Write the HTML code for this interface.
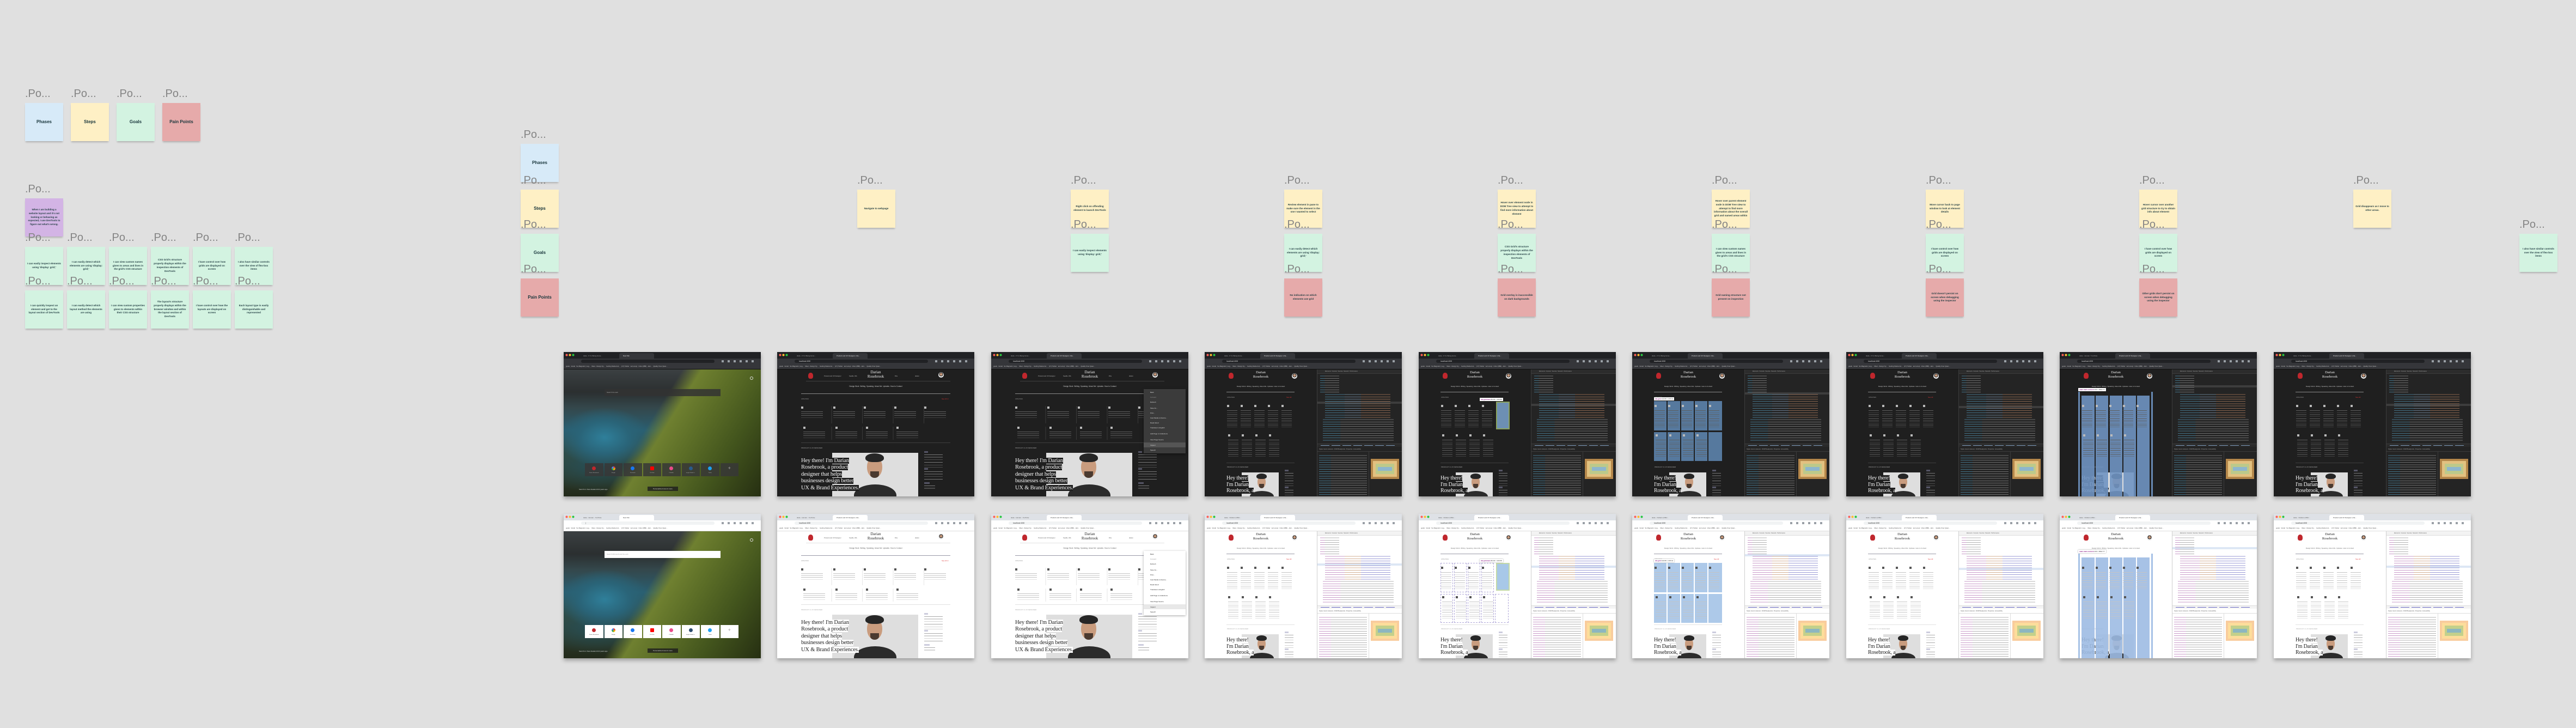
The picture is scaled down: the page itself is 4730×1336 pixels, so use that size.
<!DOCTYPE html>
<html><head><meta charset="utf-8">
<style>
*{margin:0;padding:0;box-sizing:border-box}
html,body{width:4730px;height:1336px;overflow:hidden;background:#e0e0e0;position:relative;font-family:"Liberation Sans",sans-serif}
.lb{position:absolute;font:20px/20px "Liberation Sans",sans-serif;color:#848484;white-space:nowrap}
.s{position:absolute;width:70px;height:70px;display:flex;align-items:center;justify-content:center;text-align:center;font:700 4.5px/1.55 "Liberation Sans",sans-serif;color:#1f3b40;padding:0 4px;box-shadow:0 3px 3px -1px rgba(0,0,0,.22)}
.s.h{font-size:8px;font-weight:700;color:#17343a}
.bl{background:#d7eaf8}.ye{background:#fef0c5}.gr{background:#d3f3e1}.rd{background:#e6aaaa}.pu{background:#d3b4e5}
.ss{position:absolute;width:362px;height:265px;overflow:hidden;box-shadow:0 4px 7px rgba(0,0,0,.3);font-family:"Liberation Sans",sans-serif}
.ss *{position:absolute}
.ss br{position:static}
.hero span{position:static}
.d{background:#1f1f1f;color:#ddd}.l{background:#fff;color:#333}
.tb{left:0;top:0;width:100%;height:12px;background:#202124}
.l .tb{background:#dee1e6}
.dots{left:3px;top:3px;width:18px;height:5px;background:radial-gradient(circle at 2.5px 2.5px,#ff5f57 1.9px,transparent 2.2px),radial-gradient(circle at 8.5px 2.5px,#febc2e 1.9px,transparent 2.2px),radial-gradient(circle at 14.5px 2.5px,#28c840 1.9px,transparent 2.2px)}
.t1{left:30px;top:2px;width:70px;height:10px;font-size:3px;line-height:10px;color:#aaa;white-space:nowrap;overflow:hidden;padding-left:6px}
.t2{left:102px;top:2px;width:64px;height:10px;font-size:3px;line-height:10px;color:#eee;background:#35363a;border-radius:3px 3px 0 0;white-space:nowrap;overflow:hidden;padding-left:7px}
.l .t2{background:#fff;color:#333}.l .t1{color:#555}
.ab{left:0;top:12px;width:100%;height:10px;background:#35363a}
.l .ab{background:#fff}
.url{left:32px;top:2px;width:245px;height:6px;border-radius:3px;background:#202124;font-size:3.3px;line-height:6px;padding-left:8px;color:#ddd}
.l .url{background:#f1f3f4;color:#333}
.abi{left:290px;top:3px;width:66px;height:4px;background:repeating-linear-gradient(to right,#9aa0a6 0 4px,transparent 4px 11px)}
.bmk{left:0;top:22px;width:100%;height:10px;background:#35363a;border-bottom:1px solid #111;font-size:2.9px;line-height:9px;padding-left:4px;white-space:nowrap;overflow:hidden;color:#ccc}
.l .bmk{background:#fff;border-bottom-color:#ddd;color:#444}
.logo{width:9px;height:11px;background:#c0272d;border-radius:45% 45% 35% 35%}
.nm{text-align:center;font:7px/8px "Liberation Serif",serif;color:#eee;white-space:nowrap}
.l .nm{color:#222}
.hdt{font-size:2.8px;color:#bbb;white-space:nowrap}.l .hdt{color:#555}
.av{width:10px;height:10px;border-radius:50%;background:radial-gradient(circle at 50% 40%,#c89a7c 30%,#2a2a2a 32%,#2a2a2a 45%,#eee 47%)}
.hr1{height:1px;background:#3f3f3f}.l .hr1{background:#e2e2e2}
.hr2{height:1.3px;background:#8a8a8a}.l .hr2{background:#9a9aa8}
.nav{font-size:3.2px;white-space:nowrap;color:#ccc;text-align:center}.l .nav{color:#666}
.up{font-size:3px;color:#999}.sa{font-size:3px;color:#d33}
.it{width:40px;height:26px;background:linear-gradient(#bbb,#bbb) 0 0/4px 4px no-repeat,repeating-linear-gradient(#5e5e5e 0 .8px,transparent .8px 3.6px) 0 9px/100% 13px no-repeat}
.l .it{background:linear-gradient(#555,#555) 0 0/4px 4px no-repeat,repeating-linear-gradient(#c4c4c4 0 .8px,transparent .8px 3.6px) 0 9px/100% 13px no-repeat}
.N .it{width:19px;height:44px;background:linear-gradient(#bbb,#bbb) 0 0/4px 4px no-repeat,repeating-linear-gradient(#5e5e5e 0 .8px,transparent .8px 3.8px) 0 10px/100% 34px no-repeat}
.l.N .it{background:linear-gradient(#555,#555) 0 0/4px 4px no-repeat,repeating-linear-gradient(#c4c4c4 0 .8px,transparent .8px 3.8px) 0 10px/100% 34px no-repeat}
.sep{background:repeating-linear-gradient(to right,transparent 0 55.5px,#3a3a3a 55.5px 56.5px)}
.l .sep{background:repeating-linear-gradient(to right,transparent 0 55.5px,#e6e6e6 55.5px 56.5px)}
.pux{font-size:3px;color:#aaa;white-space:nowrap}
.ph{background:#dedede;overflow:hidden}
.hair{background:#262626;border-radius:50% 50% 40% 40%}
.face{background:#c99c7e;border-radius:45% 45% 50% 50%}
.beard{background:#4a3a30;border-radius:0 0 50% 50%}
.shirt{background:#2b2b2b;border-radius:50% 50% 0 0}
.hero{font:10.5px/12.4px "Liberation Serif",serif;white-space:nowrap;letter-spacing:-.2px}
.hero span{background:#1f1f1f;color:#f2f2f2}
.l .hero span{background:#fff;color:#222}
.N .hero{font-size:10px;line-height:11.5px}
.sk{background:linear-gradient(#556,#556) 0 7px/7px 3px no-repeat,linear-gradient(#556,#556) 0 38px/7px 3px no-repeat,linear-gradient(#556,#556) 0 64px/10px 3px no-repeat,repeating-linear-gradient(#777 0 .8px,transparent .8px 4.7px) 0 13px/100% 24px no-repeat,repeating-linear-gradient(#777 0 .8px,transparent .8px 4.7px) 0 44px/100% 19px no-repeat,repeating-linear-gradient(#777 0 .8px,transparent .8px 4.7px) 0 70px/60% 8px no-repeat}
.l .sk{background:linear-gradient(#ccd,#ccd) 0 7px/7px 3px no-repeat,linear-gradient(#ccd,#ccd) 0 38px/7px 3px no-repeat,linear-gradient(#ccd,#ccd) 0 64px/10px 3px no-repeat,repeating-linear-gradient(#aaa 0 .8px,transparent .8px 4.7px) 0 13px/100% 24px no-repeat,repeating-linear-gradient(#aaa 0 .8px,transparent .8px 4.7px) 0 44px/100% 19px no-repeat,repeating-linear-gradient(#aaa 0 .8px,transparent .8px 4.7px) 0 70px/60% 8px no-repeat}
.dt{left:206px;top:32px;width:156px;height:233px;background:#242424;border-left:1px solid #3c3c3c}
.l .dt{background:#fff;border-left-color:#cfcfcf}
.dtb{left:0;top:0;width:100%;height:8px;background:#2c2c2c;border-bottom:1px solid #3c3c3c;font-size:2.6px;line-height:8px;color:#aaa;padding-left:14px;white-space:nowrap;overflow:hidden}
.l .dtb{background:#f3f3f3;border-bottom-color:#ddd;color:#555}
.sel{left:0;height:4px;width:100%;background:#3d3d3d}.l .sel{background:#dde7f5}
.cd{opacity:.55;-webkit-mask-image:repeating-linear-gradient(to bottom,transparent 0 1.6px,#000 1.6px 2.6px,transparent 2.6px 4.2px);mask-image:repeating-linear-gradient(to bottom,transparent 0 1.6px,#000 1.6px 2.6px,transparent 2.6px 4.2px)}
.c1{background:linear-gradient(to right,#5db0d7 0 30%,#9bbbdc 30% 55%,#d89a70 55% 100%)}
.l .c1{background:linear-gradient(to right,#a04da0 0 30%,#b07040 30% 55%,#4a4ab6 55% 100%)}
.c2{background:linear-gradient(to right,#5db0d7 0 25%,#aaa 25% 100%)}
.l .c2{background:linear-gradient(to right,#a04da0 0 25%,#777 25% 100%)}
.crumb{left:0;top:136px;width:100%;height:6px;background:#2a2a2a;border-top:1px solid #3c3c3c}
.l .crumb{background:#f3f3f3;border-top-color:#ddd}
.crumb i{left:6px;top:2px;width:140px;height:1px;background:repeating-linear-gradient(to right,#7d9bbc 0 16px,transparent 16px 20px)}
.l .crumb i{background:repeating-linear-gradient(to right,#6a6ac6 0 16px,transparent 16px 20px)}
.sub{left:0;top:142px;width:100%;height:9px;border-bottom:1px solid #3c3c3c;font-size:2.6px;line-height:9px;color:#aaa;padding-left:3px;white-space:nowrap;overflow:hidden}
.l .sub{border-bottom-color:#ddd;color:#555}
.bxp{left:94px;top:151px;width:62px;height:82px;border-left:1px solid #3c3c3c}
.l .bxp{border-left-color:#ddd}
.bx{left:3px;top:13px;width:52px;height:37px;background:#b5874a;padding:4px}
.bx i{left:4px;top:4px;right:4px;bottom:4px;background:#e2c180}
.bx b{left:9px;top:9px;right:9px;bottom:9px;background:#bcc98a}
.bx u{left:13px;top:15px;right:13px;bottom:15px;background:#8db6cd}
.l .bx{background:#f9cc9d}.l .bx i{background:#fddd9b}.l .bx b{background:#c3d08b}.l .bx u{background:#8cb6c0}
.sty{left:3px;top:156px;width:88px;height:75px}
.cm{left:280px;top:68px;width:77px;height:118px;background:#3b3b3b;box-shadow:0 2px 5px rgba(0,0,0,.5);font-size:3px;color:#ddd}
.l .cm{background:#fff;color:#222;box-shadow:0 1px 4px rgba(0,0,0,.35)}
.cm span{left:12px;white-space:nowrap}
.cm .ins{left:0;width:77px;height:9px;background:#555}
.l .cm .ins{background:#e8e8e8}
.land{left:0;top:32px;width:362px;height:233px;background:
radial-gradient(ellipse 85px 55px at 75px 125px,#2f7f9a 0,#2a6478 55%,transparent 100%),
linear-gradient(122deg,transparent 0 43%,#6f8030 50%,#5c6e27 62%,#43551d 78%,#262f12 100%),
radial-gradient(ellipse 110px 50px at 60px 175px,#264f58 0,transparent 100%),
linear-gradient(to bottom,#3b4042 0,#2b2f30 18%,#34474b 30%,#2a5e70 48%,#34483a 70%,#232a1a 100%)}
.gear{left:342px;top:45px;width:6px;height:6px;border:1.5px solid #ddd;border-radius:50%}
.srch{left:75px;top:68px;width:213px;height:13px;background:rgba(50,50,50,.85);font-size:3px;line-height:13px;color:#aaa;padding-left:4px}
.l .srch{background:#fff;color:#999}
.tl{top:204px;width:33.5px;height:24px;background:rgba(55,55,55,.85)}
.l .tl{background:#fff}
.tl i{left:13px;top:6px;width:7px;height:7px;border-radius:50%}
.tl span{left:0;width:100%;top:17px;text-align:center;font-size:2.2px;color:#bbb;white-space:nowrap}
.l .tl span{color:#333}
.nt1{left:28px;top:250px;font-size:3px;color:#ddd;white-space:nowrap}
.nt2{left:154px;top:247px;width:56px;height:8px;background:rgba(30,30,30,.8);font-size:3px;line-height:8px;color:#ddd;text-align:center;white-space:nowrap}
.hl{background:#6d8fb3;border:2px solid #8aa35e}
.l .hl{background:#a8c8e8;border-color:#c3d9a7}
.tt{background:#fff;color:#333;font-size:3px;line-height:6px;padding:0 2px;white-space:nowrap;box-shadow:0 0 2px rgba(0,0,0,.4)}
.tt b{position:static;color:#881280}
.cell{background:#5a7ea5;opacity:.95}
.l .cell{background:#a9c6e8}
.dash{border:1px dashed #b0a8d8}
.col{background:#6f94c2;opacity:.9}
.l .col{background:#9dbbe3}
</style></head><body>

<div class="lb" style="left:46px;top:162px">.Po...</div><div class="s h bl" style="left:46px;top:189px">Phases</div>
<div class="lb" style="left:130px;top:162px">.Po...</div><div class="s h ye" style="left:130px;top:189px">Steps</div>
<div class="lb" style="left:214px;top:162px">.Po...</div><div class="s h gr" style="left:214px;top:189px">Goals</div>
<div class="lb" style="left:298px;top:162px">.Po...</div><div class="s h rd" style="left:298px;top:189px">Pain Points</div>

<div class="lb" style="left:46px;top:337px">.Po...</div><div class="s pu" style="left:46px;top:364px">When I am building a website layout and it's not looking or behaving as expected, I use DevTools to figure out what's wrong.</div>

<div class="lb" style="left:46px;top:426px">.Po...</div><div class="s gr" style="left:46px;top:453px">I can easily inspect elements using 'display: grid;'</div>
<div class="lb" style="left:123px;top:426px">.Po...</div><div class="s gr" style="left:123px;top:453px">I can easily detect which elements are using 'display: grid;'</div>
<div class="lb" style="left:200px;top:426px">.Po...</div><div class="s gr" style="left:200px;top:453px">I can view custom names given to areas and lines in the grid's CSS structure</div>
<div class="lb" style="left:277px;top:426px">.Po...</div><div class="s gr" style="left:277px;top:453px">CSS Grid's structure properly displays within the inspection elements of DevTools</div>
<div class="lb" style="left:354px;top:426px">.Po...</div><div class="s gr" style="left:354px;top:453px">I have control over how grids are displayed on screen</div>
<div class="lb" style="left:431px;top:426px">.Po...</div><div class="s gr" style="left:431px;top:453px">I also have similar controls over the view of flex-box items</div>

<div class="lb" style="left:46px;top:506px">.Po...</div><div class="s gr" style="left:46px;top:533px">I can quickly inspect an element and get to the layout section of DevTools</div>
<div class="lb" style="left:123px;top:506px">.Po...</div><div class="s gr" style="left:123px;top:533px">I can easily detect which layout method the elements are using</div>
<div class="lb" style="left:200px;top:506px">.Po...</div><div class="s gr" style="left:200px;top:533px">I can view custom properties given to elements within their CSS structure</div>
<div class="lb" style="left:277px;top:506px">.Po...</div><div class="s gr" style="left:277px;top:533px">The layout's structure properly displays within the browser window and within the layout section of DevTools</div>
<div class="lb" style="left:354px;top:506px">.Po...</div><div class="s gr" style="left:354px;top:533px">I have control over how the layouts are displayed on screen</div>
<div class="lb" style="left:431px;top:506px">.Po...</div><div class="s gr" style="left:431px;top:533px">Each layout type is easily distinguishable and represented</div>

<div class="lb" style="left:956px;top:237px">.Po...</div><div class="s h bl" style="left:956px;top:264px">Phases</div>
<div class="lb" style="left:956px;top:321px">.Po...</div><div class="s h ye" style="left:956px;top:348px">Steps</div>
<div class="lb" style="left:956px;top:402px">.Po...</div><div class="s h gr" style="left:956px;top:429px">Goals</div>
<div class="lb" style="left:956px;top:484px">.Po...</div><div class="s h rd" style="left:956px;top:511px">Pain Points</div>

<div class="lb" style="left:1574px;top:321px">.Po...</div><div class="s ye" style="left:1574px;top:348px">Navigate to webpage</div>

<div class="lb" style="left:1966px;top:321px">.Po...</div><div class="s ye" style="left:1966px;top:348px">Right click on offending element to launch DevTools</div>
<div class="lb" style="left:1966px;top:402px">.Po...</div><div class="s gr" style="left:1966px;top:429px">I can easily inspect elements using 'display: grid;'</div>

<div class="lb" style="left:2358px;top:321px">.Po...</div><div class="s ye" style="left:2358px;top:348px">Review element in pane to make sure the element is the one I wanted to select</div>
<div class="lb" style="left:2358px;top:402px">.Po...</div><div class="s gr" style="left:2358px;top:429px">I can easily detect which elements are using 'display: grid;'</div>
<div class="lb" style="left:2358px;top:484px">.Po...</div><div class="s rd" style="left:2358px;top:511px">No indication on which elements use grid</div>

<div class="lb" style="left:2750px;top:321px">.Po...</div><div class="s ye" style="left:2750px;top:348px">Hover over element node in DOM Tree view to attempt to find more information about element</div>
<div class="lb" style="left:2750px;top:402px">.Po...</div><div class="s gr" style="left:2750px;top:429px">CSS Grid's structure properly displays within the inspection elements of DevTools</div>
<div class="lb" style="left:2750px;top:484px">.Po...</div><div class="s rd" style="left:2750px;top:511px">Grid overlay is inaccessible on dark backgrounds</div>

<div class="lb" style="left:3143px;top:321px">.Po...</div><div class="s ye" style="left:3143px;top:348px">Hover over parent element node in DOM Tree view to attempt to find more information about the overall grid and named areas within</div>
<div class="lb" style="left:3143px;top:402px">.Po...</div><div class="s gr" style="left:3143px;top:429px">I can view custom names given to areas and lines in the grid's CSS structure</div>
<div class="lb" style="left:3143px;top:484px">.Po...</div><div class="s rd" style="left:3143px;top:511px">Grid naming structure not present on inspection</div>

<div class="lb" style="left:3536px;top:321px">.Po...</div><div class="s ye" style="left:3536px;top:348px">Move cursor back to page window to look at element details</div>
<div class="lb" style="left:3536px;top:402px">.Po...</div><div class="s gr" style="left:3536px;top:429px">I have control over how grids are displayed on screen</div>
<div class="lb" style="left:3536px;top:484px">.Po...</div><div class="s rd" style="left:3536px;top:511px">Grid doesn't persist on screen when debugging using the inspector</div>

<div class="lb" style="left:3928px;top:321px">.Po...</div><div class="s ye" style="left:3928px;top:348px">Hover cursor over another grid structure to try to obtain info about element</div>
<div class="lb" style="left:3928px;top:402px">.Po...</div><div class="s gr" style="left:3928px;top:429px">I have control over how grids are displayed on screen</div>
<div class="lb" style="left:3928px;top:484px">.Po...</div><div class="s rd" style="left:3928px;top:511px">Other grids don't persist on screen when debugging using the inspector</div>

<div class="lb" style="left:4321px;top:321px">.Po...</div><div class="s ye" style="left:4321px;top:348px">Grid disappears as I move to other areas.</div>

<div class="lb" style="left:4626px;top:402px">.Po...</div><div class="s gr" style="left:4626px;top:429px">I also have similar controls over the view of flex-box items</div>

<!-- DARK ROW -->
<div class="ss d" style="left:1035px;top:646px">
<div class="tb"><i class="dots"></i><span class="t1">dude - If I'm Being Hone...</span><span class="t2">New Tab</span></div>
<div class="ab"><span class="url"> </span><i class="abi"></i></div>
<div class="bmk">goals&nbsp;&nbsp; Gmail&nbsp;&nbsp; So Magnetic | Log...&nbsp;&nbsp; Meet - Design Sy...&nbsp;&nbsp; Getting Started wi...&nbsp;&nbsp; (17) Twitter&nbsp;&nbsp; text emoji&nbsp;&nbsp; Inbox (886) - dari...&nbsp;&nbsp; Quality Over Quan...</div>
<div class="land"></div><i class="gear"></i>
<div class="srch">Search the web</div>
<div class="tl" style="left:39px"><i style="background:#c0272d"></i><span>Darian Rosebrook</span></div>
<div class="tl" style="left:74.5px"><i style="background:conic-gradient(#ea4335 0 25%,#fbbc05 0 50%,#34a853 0 75%,#4285f4 0)"></i><span>Google</span></div>
<div class="tl" style="left:110px"><i style="background:#1877f2"></i><span>Facebook</span></div>
<div class="tl" style="left:145.5px"><i style="background:#ff0000;border-radius:1px"></i><span>YouTube</span></div>
<div class="tl" style="left:181px"><i style="background:#ea4c89"></i><span>Dribbble</span></div>
<div class="tl" style="left:216.5px"><i style="background:#2a5b8c"></i><span>Insight Global Ir...</span></div>
<div class="tl" style="left:252px"><i style="background:#1da1f2"></i><span>Twitter</span></div>
<div class="tl" style="left:287.5px"><span style="top:4px;font-size:9px;color:#aaa">+</span></div>
<span class="nt1">Sand fix in New Zealand 210 years ago</span><span class="nt2">Personalized news &amp; more</span>
</div>

<div class="ss d" style="left:1427px;top:646px">
<div class="tb"><i class="dots"></i><span class="t1">dude - If I'm Being Hone...</span><span class="t2">Product and UX Designer | Da...</span></div>
<div class="ab"><span class="url">localhost:4000</span><i class="abi"></i></div>
<div class="bmk">goals&nbsp;&nbsp; Gmail&nbsp;&nbsp; So Magnetic | Log...&nbsp;&nbsp; Meet - Design Sy...&nbsp;&nbsp; Getting Started wi...&nbsp;&nbsp; (17) Twitter&nbsp;&nbsp; text emoji&nbsp;&nbsp; Inbox (886) - dari...&nbsp;&nbsp; Quality Over Quan...</div>
<i class="logo" style="left:57px;top:38px"></i><div class="nm" style="left:131px;top:33px;width:100px">Darian<br>Rosebrook</div>
<span class="hdt" style="left:86px;top:42px">Product and UX Designer</span><span class="hdt" style="left:132px;top:42px">Seattle, WA</span><span class="hdt" style="left:216px;top:42px">Dhe</span><span class="hdt" style="left:253px;top:42px">darian</span><i class="av" style="left:296px;top:37px"></i>
<i class="hr1" style="left:53px;top:53px;width:265px"></i>
<div class="nav" style="left:44px;top:61px;width:274px">Design Work&nbsp; Writing&nbsp; Speaking&nbsp; About Me&nbsp; Updates&nbsp; How to Contact</div>
<i class="hr2" style="left:44px;top:76px;width:274px"></i>
<span class="up" style="left:44px;top:84px">UPDATES</span><span class="sa" style="left:302px;top:84px">See All ➜</span>
<i class="sep" style="left:44px;top:99px;width:274px;height:32px"></i><i class="sep" style="left:44px;top:137px;width:220px;height:24px"></i>
<i class="it" style="left:44px;top:100px"></i><i class="it" style="left:103px;top:100px"></i><i class="it" style="left:159px;top:100px"></i><i class="it" style="left:215px;top:100px"></i><i class="it" style="left:270px;top:100px"></i>
<i class="it" style="left:48px;top:137px"></i><i class="it" style="left:107px;top:137px"></i><i class="it" style="left:163px;top:137px"></i><i class="it" style="left:219px;top:137px"></i>
<i class="hr1" style="left:44px;top:166px;width:274px"></i>
<span class="pux" style="left:44px;top:174px">PRODUCT &amp; UX DESIGNER</span>
<div class="ph" style="left:101px;top:185px;width:158px;height:80px"><i class="shirt" style="left:40px;top:58px;width:78px;height:40px"></i><i class="face" style="left:64px;top:8px;width:28px;height:38px"></i><i class="beard" style="left:70px;top:34px;width:16px;height:12px"></i><i class="hair" style="left:61px;top:1px;width:34px;height:16px"></i></div>
<div class="hero" style="left:44px;top:194px"><span>Hey there! I'm Darian</span><br><span>Rosebrook, a product</span><br><span>designer that helps</span><br><span>businesses design better</span><br><span>UX &amp; Brand Experiences.</span></div>
<i class="sk" style="left:270px;top:175px;width:34px;height:90px"></i>
</div>

<div class="ss d" style="left:1820px;top:646px">
<div class="tb"><i class="dots"></i><span class="t1">dude - If I'm Being Hone...</span><span class="t2">Product and UX Designer | Da...</span></div>
<div class="ab"><span class="url">localhost:4000</span><i class="abi"></i></div>
<div class="bmk">goals&nbsp;&nbsp; Gmail&nbsp;&nbsp; So Magnetic | Log...&nbsp;&nbsp; Meet - Design Sy...&nbsp;&nbsp; Getting Started wi...&nbsp;&nbsp; (17) Twitter&nbsp;&nbsp; text emoji&nbsp;&nbsp; Inbox (886) - dari...&nbsp;&nbsp; Quality Over Quan...</div>
<i class="logo" style="left:57px;top:38px"></i><div class="nm" style="left:131px;top:33px;width:100px">Darian<br>Rosebrook</div>
<span class="hdt" style="left:86px;top:42px">Product and UX Designer</span><span class="hdt" style="left:132px;top:42px">Seattle, WA</span><span class="hdt" style="left:216px;top:42px">Dhe</span><span class="hdt" style="left:253px;top:42px">darian</span><i class="av" style="left:296px;top:37px"></i>
<i class="hr1" style="left:53px;top:53px;width:265px"></i>
<div class="nav" style="left:44px;top:61px;width:274px">Design Work&nbsp; Writing&nbsp; Speaking&nbsp; About Me&nbsp; Updates&nbsp; How to Contact</div>
<i class="hr2" style="left:44px;top:76px;width:274px"></i>
<span class="up" style="left:44px;top:84px">UPDATES</span>
<i class="sep" style="left:44px;top:99px;width:274px;height:32px"></i><i class="sep" style="left:44px;top:137px;width:220px;height:24px"></i>
<i class="it" style="left:44px;top:100px"></i><i class="it" style="left:103px;top:100px"></i><i class="it" style="left:159px;top:100px"></i><i class="it" style="left:215px;top:100px"></i><i class="it" style="left:270px;top:100px"></i>
<i class="it" style="left:48px;top:137px"></i><i class="it" style="left:107px;top:137px"></i><i class="it" style="left:163px;top:137px"></i><i class="it" style="left:219px;top:137px"></i>
<i class="hr1" style="left:44px;top:166px;width:274px"></i>
<span class="pux" style="left:44px;top:174px">PRODUCT &amp; UX DESIGNER</span>
<div class="ph" style="left:101px;top:185px;width:158px;height:80px"><i class="shirt" style="left:40px;top:58px;width:78px;height:40px"></i><i class="face" style="left:64px;top:8px;width:28px;height:38px"></i><i class="beard" style="left:70px;top:34px;width:16px;height:12px"></i><i class="hair" style="left:61px;top:1px;width:34px;height:16px"></i></div>
<div class="hero" style="left:44px;top:194px"><span>Hey there! I'm Darian</span><br><span>Rosebrook, a product</span><br><span>designer that helps</span><br><span>businesses design better</span><br><span>UX &amp; Brand Experiences.</span></div>
<i class="sk" style="left:270px;top:175px;width:34px;height:90px"></i>
<div class="cm"><span style="top:4px">Back</span><span style="top:13px;opacity:.5">Forward</span><span style="top:22px">Refresh</span><span style="top:33px">Save As...</span><span style="top:42px">Print...</span><span style="top:51px">Cast Media to Device...</span><span style="top:60px">Read Aloud</span><span style="top:69px">Translate to English</span><span style="top:80px">Add Page to Collections</span><i class="ins" style="top:98px"></i><span style="top:91px">View Page Source</span><span style="top:101px">Inspect</span><span style="top:110px">Speech</span></div>
</div>

<div class="ss d N" style="left:2212px;top:646px">
<div class="tb"><i class="dots"></i><span class="t1">dude - If I'm Being Hone...</span><span class="t2">Product and UX Designer | Da...</span></div>
<div class="ab"><span class="url">localhost:4000</span><i class="abi"></i></div>
<div class="bmk">goals&nbsp;&nbsp; Gmail&nbsp;&nbsp; So Magnetic | Log...&nbsp;&nbsp; Meet - Design Sy...&nbsp;&nbsp; Getting Started wi...&nbsp;&nbsp; (17) Twitter&nbsp;&nbsp; text emoji&nbsp;&nbsp; Inbox (886) - dari...&nbsp;&nbsp; Quality Over Quan...</div>
<i class="logo" style="left:44px;top:38px"></i><div class="nm" style="left:83px;top:34px;width:40px;font-size:6.5px">Darian<br>Rosebrook</div><i class="av" style="left:160px;top:39px"></i>
<div class="nav" style="left:40px;top:61px;width:126px;font-size:2.9px">Design Work&nbsp; Writing&nbsp; Speaking&nbsp; About Me&nbsp; Updates&nbsp; How to Contact</div>
<i class="hr2" style="left:40px;top:73px;width:125px"></i>
<span class="up" style="left:41px;top:81px">UPDATES</span><span class="sa" style="left:150px;top:81px">See All</span>
<i class="it" style="left:41px;top:97px"></i><i class="it" style="left:66px;top:97px"></i><i class="it" style="left:91px;top:97px"></i><i class="it" style="left:116px;top:97px"></i><i class="it" style="left:141px;top:97px"></i>
<i class="it" style="left:43px;top:151px"></i><i class="it" style="left:68px;top:151px"></i><i class="it" style="left:93px;top:151px"></i><i class="it" style="left:118px;top:151px"></i>
<i class="hr1" style="left:40px;top:203px;width:125px"></i>
<span class="pux" style="left:41px;top:209px">PRODUCT &amp; UX DESIGNER</span>
<div class="ph" style="left:68px;top:221px;width:68px;height:44px"><i class="shirt" style="left:15px;top:34px;width:44px;height:20px"></i><i class="face" style="left:29px;top:7px;width:15px;height:22px"></i><i class="beard" style="left:32px;top:21px;width:9px;height:8px"></i><i class="hair" style="left:27px;top:2px;width:19px;height:10px"></i></div>
<div class="hero" style="left:40px;top:226px"><span>Hey there!</span><br><span>I'm Darian</span><br><span>Rosebrook, a</span></div>
<i class="sk" style="left:147px;top:209px;width:16px;height:56px"></i>
<div class="dt"><div class="dtb">Elements&nbsp; Console&nbsp; Sources&nbsp; Network&nbsp; Performance</div>
<i class="sel" style="top:59px"></i>
<i class="cd c2" style="left:5px;top:10px;width:35px;height:34px"></i><i class="cd c1" style="left:14px;top:44px;width:120px;height:46px"></i><i class="cd c2" style="left:10px;top:90px;width:130px;height:42px"></i>
<div class="crumb"><i></i></div><div class="sub">Styles&nbsp; Event Listeners&nbsp; DOM Breakpoints&nbsp; Properties&nbsp; Accessibility</div>
<i class="cd c2 sty"></i><div class="bxp"><div class="bx"><i></i><b></b><u></u></div></div></div>
</div>

<div class="ss d N" style="left:2605px;top:646px">
<div class="tb"><i class="dots"></i><span class="t1">dude - If I'm Being Hone...</span><span class="t2">Product and UX Designer | Da...</span></div>
<div class="ab"><span class="url">localhost:4000</span><i class="abi"></i></div>
<div class="bmk">goals&nbsp;&nbsp; Gmail&nbsp;&nbsp; So Magnetic | Log...&nbsp;&nbsp; Meet - Design Sy...&nbsp;&nbsp; Getting Started wi...&nbsp;&nbsp; (17) Twitter&nbsp;&nbsp; text emoji&nbsp;&nbsp; Inbox (886) - dari...&nbsp;&nbsp; Quality Over Quan...</div>
<i class="logo" style="left:44px;top:38px"></i><div class="nm" style="left:83px;top:34px;width:40px;font-size:6.5px">Darian<br>Rosebrook</div><i class="av" style="left:160px;top:39px"></i>
<div class="nav" style="left:40px;top:61px;width:126px;font-size:2.9px">Design Work&nbsp; Writing&nbsp; Speaking&nbsp; About Me&nbsp; Updates&nbsp; How to Contact</div>
<i class="hr2" style="left:40px;top:73px;width:125px"></i>
<span class="up" style="left:41px;top:81px">UPDATES</span>
<i class="it" style="left:41px;top:97px"></i><i class="it" style="left:66px;top:97px"></i><i class="it" style="left:91px;top:97px"></i><i class="it" style="left:116px;top:97px"></i>
<i class="it" style="left:43px;top:151px"></i><i class="it" style="left:68px;top:151px"></i><i class="it" style="left:93px;top:151px"></i><i class="it" style="left:118px;top:151px"></i>
<i class="hl" style="left:142px;top:91px;width:25px;height:51px"></i><span class="tt" style="left:112px;top:84px"><b>div.grid-item</b> 80.00 × 160.58</span>
<i class="hr1" style="left:40px;top:203px;width:125px"></i>
<span class="pux" style="left:41px;top:209px">PRODUCT &amp; UX DESIGNER</span>
<div class="ph" style="left:68px;top:221px;width:68px;height:44px"><i class="shirt" style="left:15px;top:34px;width:44px;height:20px"></i><i class="face" style="left:29px;top:7px;width:15px;height:22px"></i><i class="beard" style="left:32px;top:21px;width:9px;height:8px"></i><i class="hair" style="left:27px;top:2px;width:19px;height:10px"></i></div>
<div class="hero" style="left:40px;top:226px"><span>Hey there!</span><br><span>I'm Darian</span><br><span>Rosebrook, a</span></div>
<i class="sk" style="left:147px;top:209px;width:16px;height:56px"></i>
<div class="dt"><div class="dtb">Elements&nbsp; Console&nbsp; Sources&nbsp; Network&nbsp; Performance</div>
<i class="sel" style="top:63px"></i>
<i class="cd c2" style="left:5px;top:10px;width:35px;height:34px"></i><i class="cd c1" style="left:14px;top:44px;width:120px;height:46px"></i><i class="cd c2" style="left:10px;top:90px;width:130px;height:42px"></i>
<div class="crumb"><i></i></div><div class="sub">Styles&nbsp; Event Listeners&nbsp; DOM Breakpoints&nbsp; Properties&nbsp; Accessibility</div>
<i class="cd c2 sty"></i><div class="bxp"><div class="bx"><i></i><b></b><u></u></div></div></div>
</div>

<div class="ss d N" style="left:2997px;top:646px">
<div class="tb"><i class="dots"></i><span class="t1">dude - If I'm Being Hone...</span><span class="t2">Product and UX Designer | Da...</span></div>
<div class="ab"><span class="url">localhost:4000</span><i class="abi"></i></div>
<div class="bmk">goals&nbsp;&nbsp; Gmail&nbsp;&nbsp; So Magnetic | Log...&nbsp;&nbsp; Meet - Design Sy...&nbsp;&nbsp; Getting Started wi...&nbsp;&nbsp; (17) Twitter&nbsp;&nbsp; text emoji&nbsp;&nbsp; Inbox (886) - dari...&nbsp;&nbsp; Quality Over Quan...</div>
<i class="logo" style="left:44px;top:38px"></i><div class="nm" style="left:83px;top:34px;width:40px;font-size:6.5px">Darian<br>Rosebrook</div><i class="av" style="left:160px;top:39px"></i>
<div class="nav" style="left:40px;top:61px;width:126px;font-size:2.9px">Design Work&nbsp; Writing&nbsp; Speaking&nbsp; About Me&nbsp; Updates&nbsp; How to Contact</div>
<i class="hr2" style="left:40px;top:73px;width:125px"></i>
<span class="up" style="left:41px;top:81px">UPDATES</span>
<i class="cell" style="left:40px;top:90px;width:23px;height:54px"></i><i class="cell" style="left:65px;top:90px;width:23px;height:54px"></i><i class="cell" style="left:90px;top:90px;width:23px;height:54px"></i><i class="cell" style="left:115px;top:90px;width:23px;height:54px"></i><i class="cell" style="left:140px;top:90px;width:25px;height:54px"></i>
<i class="cell" style="left:40px;top:147px;width:23px;height:53px"></i><i class="cell" style="left:65px;top:147px;width:23px;height:53px"></i><i class="cell" style="left:90px;top:147px;width:23px;height:53px"></i><i class="cell" style="left:115px;top:147px;width:23px;height:53px"></i><i class="cell" style="left:140px;top:147px;width:25px;height:53px"></i>
<i class="it" style="left:41px;top:97px"></i><i class="it" style="left:66px;top:97px"></i><i class="it" style="left:91px;top:97px"></i><i class="it" style="left:116px;top:97px"></i><i class="it" style="left:141px;top:97px"></i>
<i class="it" style="left:43px;top:151px"></i><i class="it" style="left:68px;top:151px"></i><i class="it" style="left:93px;top:151px"></i><i class="it" style="left:118px;top:151px"></i>
<span class="tt" style="left:40px;top:83px"><b>div.grid</b> 440.88 × 378.19</span>
<span class="pux" style="left:41px;top:209px">PRODUCT &amp; UX DESIGNER</span>
<div class="ph" style="left:68px;top:221px;width:68px;height:44px"><i class="shirt" style="left:15px;top:34px;width:44px;height:20px"></i><i class="face" style="left:29px;top:7px;width:15px;height:22px"></i><i class="beard" style="left:32px;top:21px;width:9px;height:8px"></i><i class="hair" style="left:27px;top:2px;width:19px;height:10px"></i></div>
<div class="hero" style="left:40px;top:226px"><span>Hey there!</span><br><span>I'm Darian</span><br><span>Rosebrook, a</span></div>
<i class="sk" style="left:147px;top:209px;width:16px;height:56px"></i>
<div class="dt"><div class="dtb">Elements&nbsp; Console&nbsp; Sources&nbsp; Network&nbsp; Performance</div>
<i class="sel" style="top:42px"></i>
<i class="cd c2" style="left:5px;top:10px;width:35px;height:34px"></i><i class="cd c1" style="left:14px;top:44px;width:120px;height:46px"></i><i class="cd c2" style="left:10px;top:90px;width:130px;height:42px"></i>
<div class="crumb"><i></i></div><div class="sub">Styles&nbsp; Event Listeners&nbsp; DOM Breakpoints&nbsp; Properties&nbsp; Accessibility</div>
<i class="cd c2 sty"></i><div class="bxp"><div class="bx"><i></i><b></b><u></u></div></div></div>
</div>

<div class="ss d N" style="left:3390px;top:646px">
<div class="tb"><i class="dots"></i><span class="t1">dude - If I'm Being Hone...</span><span class="t2">Product and UX Designer | Da...</span></div>
<div class="ab"><span class="url">localhost:4000</span><i class="abi"></i></div>
<div class="bmk">goals&nbsp;&nbsp; Gmail&nbsp;&nbsp; So Magnetic | Log...&nbsp;&nbsp; Meet - Design Sy...&nbsp;&nbsp; Getting Started wi...&nbsp;&nbsp; (17) Twitter&nbsp;&nbsp; text emoji&nbsp;&nbsp; Inbox (886) - dari...&nbsp;&nbsp; Quality Over Quan...</div>
<i class="logo" style="left:44px;top:38px"></i><div class="nm" style="left:83px;top:34px;width:40px;font-size:6.5px">Darian<br>Rosebrook</div><i class="av" style="left:160px;top:39px"></i>
<div class="nav" style="left:40px;top:61px;width:126px;font-size:2.9px">Design Work&nbsp; Writing&nbsp; Speaking&nbsp; About Me&nbsp; Updates&nbsp; How to Contact</div>
<i class="hr2" style="left:40px;top:73px;width:125px"></i>
<span class="up" style="left:41px;top:81px">UPDATES</span><span class="sa" style="left:150px;top:81px">See All</span>
<i class="it" style="left:41px;top:97px"></i><i class="it" style="left:66px;top:97px"></i><i class="it" style="left:91px;top:97px"></i><i class="it" style="left:116px;top:97px"></i><i class="it" style="left:141px;top:97px"></i>
<i class="it" style="left:43px;top:151px"></i><i class="it" style="left:68px;top:151px"></i><i class="it" style="left:93px;top:151px"></i><i class="it" style="left:118px;top:151px"></i>
<i class="hr1" style="left:40px;top:203px;width:125px"></i>
<span class="pux" style="left:41px;top:209px">PRODUCT &amp; UX DESIGNER</span>
<div class="ph" style="left:68px;top:221px;width:68px;height:44px"><i class="shirt" style="left:15px;top:34px;width:44px;height:20px"></i><i class="face" style="left:29px;top:7px;width:15px;height:22px"></i><i class="beard" style="left:32px;top:21px;width:9px;height:8px"></i><i class="hair" style="left:27px;top:2px;width:19px;height:10px"></i></div>
<div class="hero" style="left:40px;top:226px"><span>Hey there!</span><br><span>I'm Darian</span><br><span>Rosebrook, a</span></div>
<i class="sk" style="left:147px;top:209px;width:16px;height:56px"></i>
<div class="dt"><div class="dtb">Elements&nbsp; Console&nbsp; Sources&nbsp; Network&nbsp; Performance</div>
<i class="sel" style="top:67px"></i>
<i class="cd c2" style="left:5px;top:10px;width:35px;height:34px"></i><i class="cd c1" style="left:14px;top:44px;width:120px;height:46px"></i><i class="cd c2" style="left:10px;top:90px;width:130px;height:42px"></i>
<div class="crumb"><i></i></div><div class="sub">Styles&nbsp; Event Listeners&nbsp; DOM Breakpoints&nbsp; Properties&nbsp; Accessibility</div>
<i class="cd c2 sty"></i><div class="bxp"><div class="bx"><i></i><b></b><u></u></div></div></div>
</div>

<div class="ss d N" style="left:3782px;top:646px">
<div class="tb"><i class="dots"></i><span class="t1">dude - Human / YouTube</span><span class="t2">Product and UX Designer | Da...</span></div>
<div class="ab"><span class="url">localhost:4000</span><i class="abi"></i></div>
<div class="bmk">goals&nbsp;&nbsp; Gmail&nbsp;&nbsp; So Magnetic | Log...&nbsp;&nbsp; Meet - Design Sy...&nbsp;&nbsp; Getting Started wi...&nbsp;&nbsp; (17) Twitter&nbsp;&nbsp; text emoji&nbsp;&nbsp; Inbox (886) - dari...&nbsp;&nbsp; Quality Over Quan...</div>
<i class="logo" style="left:44px;top:38px"></i><div class="nm" style="left:83px;top:34px;width:40px;font-size:6.5px">Darian<br>Rosebrook</div><i class="av" style="left:160px;top:39px"></i>
<div class="nav" style="left:40px;top:61px;width:126px;font-size:2.9px">Design Work&nbsp; Writing&nbsp; Speaking&nbsp; About Me&nbsp; Updates&nbsp; How to Contact</div>
<span class="pux" style="left:41px;top:209px">PRODUCT &amp; UX DESIGNER</span>
<div class="ph" style="left:68px;top:221px;width:68px;height:44px"><i class="shirt" style="left:15px;top:34px;width:44px;height:20px"></i><i class="face" style="left:29px;top:7px;width:15px;height:22px"></i><i class="beard" style="left:32px;top:21px;width:9px;height:8px"></i><i class="hair" style="left:27px;top:2px;width:19px;height:10px"></i></div>
<div class="hero" style="left:40px;top:226px"><span>Hey there!</span><br><span>I'm Darian</span><br><span>Rosebrook, a</span></div>
<i class="col" style="left:34px;top:73px;width:3px;height:192px"></i>
<i class="col" style="left:40px;top:80px;width:24px;height:185px"></i><i class="col" style="left:66px;top:80px;width:23px;height:185px"></i><i class="col" style="left:92px;top:80px;width:23px;height:185px"></i><i class="col" style="left:117px;top:80px;width:23px;height:185px"></i><i class="col" style="left:142px;top:80px;width:23px;height:185px"></i>
<i class="col" style="left:168px;top:73px;width:3px;height:192px"></i>
<i class="it" style="left:41px;top:97px"></i><i class="it" style="left:66px;top:97px"></i><i class="it" style="left:91px;top:97px"></i><i class="it" style="left:116px;top:97px"></i><i class="it" style="left:141px;top:97px"></i>
<i class="it" style="left:43px;top:151px"></i><i class="it" style="left:68px;top:151px"></i><i class="it" style="left:93px;top:151px"></i><i class="it" style="left:118px;top:151px"></i>
<span class="tt" style="left:34px;top:66px"><b>main.main-content</b> 400 × 8602.77</span>
<div class="dt"><div class="dtb">Elements&nbsp; Console&nbsp; Sources&nbsp; Network&nbsp; Performance</div>
<i class="sel" style="top:29px"></i>
<i class="cd c2" style="left:5px;top:10px;width:35px;height:34px"></i><i class="cd c1" style="left:14px;top:44px;width:120px;height:46px"></i><i class="cd c2" style="left:10px;top:90px;width:130px;height:42px"></i>
<div class="crumb"><i></i></div><div class="sub">Styles&nbsp; Event Listeners&nbsp; DOM Breakpoints&nbsp; Properties&nbsp; Accessibility</div>
<i class="cd c2 sty"></i><div class="bxp"><div class="bx"><i></i><b></b><u></u></div></div></div>
</div>

<div class="ss d N" style="left:4175px;top:646px">
<div class="tb"><i class="dots"></i><span class="t1">dude - If I'm Being Hone...</span><span class="t2">Product and UX Designer | Da...</span></div>
<div class="ab"><span class="url">localhost:4000</span><i class="abi"></i></div>
<div class="bmk">goals&nbsp;&nbsp; Gmail&nbsp;&nbsp; So Magnetic | Log...&nbsp;&nbsp; Meet - Design Sy...&nbsp;&nbsp; Getting Started wi...&nbsp;&nbsp; (17) Twitter&nbsp;&nbsp; text emoji&nbsp;&nbsp; Inbox (886) - dari...&nbsp;&nbsp; Quality Over Quan...</div>
<i class="logo" style="left:44px;top:38px"></i><div class="nm" style="left:83px;top:34px;width:40px;font-size:6.5px">Darian<br>Rosebrook</div><i class="av" style="left:160px;top:39px"></i>
<div class="nav" style="left:40px;top:61px;width:126px;font-size:2.9px">Design Work&nbsp; Writing&nbsp; Speaking&nbsp; About Me&nbsp; Updates&nbsp; How to Contact</div>
<i class="hr2" style="left:40px;top:73px;width:125px"></i>
<span class="up" style="left:41px;top:81px">UPDATES</span><span class="sa" style="left:150px;top:81px">See All</span>
<i class="it" style="left:41px;top:97px"></i><i class="it" style="left:66px;top:97px"></i><i class="it" style="left:91px;top:97px"></i><i class="it" style="left:116px;top:97px"></i><i class="it" style="left:141px;top:97px"></i>
<i class="it" style="left:43px;top:151px"></i><i class="it" style="left:68px;top:151px"></i><i class="it" style="left:93px;top:151px"></i><i class="it" style="left:118px;top:151px"></i>
<i class="hr1" style="left:40px;top:203px;width:125px"></i>
<span class="pux" style="left:41px;top:209px">PRODUCT &amp; UX DESIGNER</span>
<div class="ph" style="left:68px;top:221px;width:68px;height:44px"><i class="shirt" style="left:15px;top:34px;width:44px;height:20px"></i><i class="face" style="left:29px;top:7px;width:15px;height:22px"></i><i class="beard" style="left:32px;top:21px;width:9px;height:8px"></i><i class="hair" style="left:27px;top:2px;width:19px;height:10px"></i></div>
<div class="hero" style="left:40px;top:226px"><span>Hey there!</span><br><span>I'm Darian</span><br><span>Rosebrook, a</span></div>
<i class="sk" style="left:147px;top:209px;width:16px;height:56px"></i>
<div class="dt"><div class="dtb">Elements&nbsp; Console&nbsp; Sources&nbsp; Network&nbsp; Performance</div>
<i class="sel" style="top:63px"></i>
<i class="cd c2" style="left:5px;top:10px;width:35px;height:34px"></i><i class="cd c1" style="left:14px;top:44px;width:120px;height:46px"></i><i class="cd c2" style="left:10px;top:90px;width:130px;height:42px"></i>
<div class="crumb"><i></i></div><div class="sub">Styles&nbsp; Event Listeners&nbsp; DOM Breakpoints&nbsp; Properties&nbsp; Accessibility</div>
<i class="cd c2 sty"></i><div class="bxp"><div class="bx"><i></i><b></b><u></u></div></div></div>
</div>

<!-- LIGHT ROW -->
<div class="ss l" style="left:1035px;top:943px">
<div class="tb"><i class="dots"></i><span class="t1">dude - Human - YouTube</span><span class="t2">New Tab</span></div>
<div class="ab"><span class="url">|</span><i class="abi"></i></div>
<div class="bmk">goals&nbsp;&nbsp; Gmail&nbsp;&nbsp; So Magnetic | Log...&nbsp;&nbsp; Meet - Design Sy...&nbsp;&nbsp; Getting Started wi...&nbsp;&nbsp; (17) Twitter&nbsp;&nbsp; text emoji&nbsp;&nbsp; Inbox (886) - dari...&nbsp;&nbsp; Quality Over Quan...</div>
<div class="land"></div><i class="gear"></i>
<div class="srch">Search Microsoft and the web</div>
<div class="tl" style="left:39px"><i style="background:#c0272d"></i><span>Darian Rosebrook</span></div>
<div class="tl" style="left:74.5px"><i style="background:conic-gradient(#ea4335 0 25%,#fbbc05 0 50%,#34a853 0 75%,#4285f4 0)"></i><span>Google</span></div>
<div class="tl" style="left:110px"><i style="background:#1877f2"></i><span>Facebook</span></div>
<div class="tl" style="left:145.5px"><i style="background:#ff0000;border-radius:1px"></i><span>YouTube</span></div>
<div class="tl" style="left:181px"><i style="background:#ea4c89"></i><span>Dribbble</span></div>
<div class="tl" style="left:216.5px"><i style="background:#2a4a6c"></i><span>Insight Global Ir...</span></div>
<div class="tl" style="left:252px"><i style="background:#1da1f2"></i><span>Twitter</span></div>
<div class="tl" style="left:287.5px"><span style="top:4px;font-size:9px;color:#999">+</span></div>
<span class="nt1">Sand fix in New Zealand 210 years ago</span><span class="nt2">Personalized news &amp; more</span>
</div>

<div class="ss l" style="left:1427px;top:943px">
<div class="tb"><i class="dots"></i><span class="t1">dude - Human - YouTube</span><span class="t2">Product and UX Designer | Da...</span></div>
<div class="ab"><span class="url">localhost:4000</span><i class="abi"></i></div>
<div class="bmk">goals&nbsp;&nbsp; Gmail&nbsp;&nbsp; So Magnetic | Log...&nbsp;&nbsp; Meet - Design Sy...&nbsp;&nbsp; Getting Started wi...&nbsp;&nbsp; (17) Twitter&nbsp;&nbsp; text emoji&nbsp;&nbsp; Inbox (886) - dari...&nbsp;&nbsp; Quality Over Quan...</div>
<i class="logo" style="left:57px;top:38px"></i><div class="nm" style="left:131px;top:33px;width:100px">Darian<br>Rosebrook</div>
<span class="hdt" style="left:86px;top:42px">Product and UX Designer</span><span class="hdt" style="left:132px;top:42px">Seattle, WA</span><span class="hdt" style="left:216px;top:42px">Dhe</span><span class="hdt" style="left:253px;top:42px">darian</span><i class="av" style="left:296px;top:37px"></i>
<i class="hr1" style="left:53px;top:53px;width:265px"></i>
<div class="nav" style="left:44px;top:61px;width:274px">Design Work&nbsp; Writing&nbsp; Speaking&nbsp; About Me&nbsp; Updates&nbsp; How to Contact</div>
<i class="hr2" style="left:44px;top:76px;width:274px"></i>
<span class="up" style="left:44px;top:84px">UPDATES</span><span class="sa" style="left:302px;top:84px">See All ➜</span>
<i class="sep" style="left:44px;top:99px;width:274px;height:32px"></i><i class="sep" style="left:44px;top:137px;width:220px;height:24px"></i>
<i class="it" style="left:44px;top:100px"></i><i class="it" style="left:103px;top:100px"></i><i class="it" style="left:159px;top:100px"></i><i class="it" style="left:215px;top:100px"></i><i class="it" style="left:270px;top:100px"></i>
<i class="it" style="left:48px;top:137px"></i><i class="it" style="left:107px;top:137px"></i><i class="it" style="left:163px;top:137px"></i><i class="it" style="left:219px;top:137px"></i>
<i class="hr1" style="left:44px;top:166px;width:274px"></i>
<span class="pux" style="left:44px;top:174px">PRODUCT &amp; UX DESIGNER</span>
<div class="ph" style="left:101px;top:185px;width:158px;height:80px"><i class="shirt" style="left:40px;top:58px;width:78px;height:40px"></i><i class="face" style="left:64px;top:8px;width:28px;height:38px"></i><i class="beard" style="left:70px;top:34px;width:16px;height:12px"></i><i class="hair" style="left:61px;top:1px;width:34px;height:16px"></i></div>
<div class="hero" style="left:44px;top:194px"><span>Hey there! I'm Darian</span><br><span>Rosebrook, a product</span><br><span>designer that helps</span><br><span>businesses design better</span><br><span>UX &amp; Brand Experiences.</span></div>
<i class="sk" style="left:270px;top:175px;width:34px;height:90px"></i>
</div>

<div class="ss l" style="left:1820px;top:943px">
<div class="tb"><i class="dots"></i><span class="t1">dude - Human - YouTube</span><span class="t2">Product and UX Designer | Da...</span></div>
<div class="ab"><span class="url">localhost:4000</span><i class="abi"></i></div>
<div class="bmk">goals&nbsp;&nbsp; Gmail&nbsp;&nbsp; So Magnetic | Log...&nbsp;&nbsp; Meet - Design Sy...&nbsp;&nbsp; Getting Started wi...&nbsp;&nbsp; (17) Twitter&nbsp;&nbsp; text emoji&nbsp;&nbsp; Inbox (886) - dari...&nbsp;&nbsp; Quality Over Quan...</div>
<i class="logo" style="left:57px;top:38px"></i><div class="nm" style="left:131px;top:33px;width:100px">Darian<br>Rosebrook</div>
<span class="hdt" style="left:86px;top:42px">Product and UX Designer</span><span class="hdt" style="left:132px;top:42px">Seattle, WA</span><span class="hdt" style="left:216px;top:42px">Dhe</span><span class="hdt" style="left:253px;top:42px">darian</span><i class="av" style="left:296px;top:37px"></i>
<i class="hr1" style="left:53px;top:53px;width:265px"></i>
<div class="nav" style="left:44px;top:61px;width:274px">Design Work&nbsp; Writing&nbsp; Speaking&nbsp; About Me&nbsp; Updates&nbsp; How to Contact</div>
<i class="hr2" style="left:44px;top:76px;width:274px"></i>
<span class="up" style="left:44px;top:84px">UPDATES</span>
<i class="sep" style="left:44px;top:99px;width:274px;height:32px"></i><i class="sep" style="left:44px;top:137px;width:220px;height:24px"></i>
<i class="it" style="left:44px;top:100px"></i><i class="it" style="left:103px;top:100px"></i><i class="it" style="left:159px;top:100px"></i><i class="it" style="left:215px;top:100px"></i><i class="it" style="left:270px;top:100px"></i>
<i class="it" style="left:48px;top:137px"></i><i class="it" style="left:107px;top:137px"></i><i class="it" style="left:163px;top:137px"></i><i class="it" style="left:219px;top:137px"></i>
<i class="hr1" style="left:44px;top:166px;width:274px"></i>
<span class="pux" style="left:44px;top:174px">PRODUCT &amp; UX DESIGNER</span>
<div class="ph" style="left:101px;top:185px;width:158px;height:80px"><i class="shirt" style="left:40px;top:58px;width:78px;height:40px"></i><i class="face" style="left:64px;top:8px;width:28px;height:38px"></i><i class="beard" style="left:70px;top:34px;width:16px;height:12px"></i><i class="hair" style="left:61px;top:1px;width:34px;height:16px"></i></div>
<div class="hero" style="left:44px;top:194px"><span>Hey there! I'm Darian</span><br><span>Rosebrook, a product</span><br><span>designer that helps</span><br><span>businesses design better</span><br><span>UX &amp; Brand Experiences.</span></div>
<i class="sk" style="left:270px;top:175px;width:34px;height:90px"></i>
<div class="cm"><span style="top:4px">Back</span><span style="top:13px;opacity:.5">Forward</span><span style="top:22px">Refresh</span><span style="top:33px">Save As...</span><span style="top:42px">Print...</span><span style="top:51px">Cast Media to Device...</span><span style="top:60px">Read Aloud</span><span style="top:69px">Translate to English</span><span style="top:80px">Add Page to Collections</span><i class="ins" style="top:98px"></i><span style="top:91px">View Page Source</span><span style="top:101px">Inspect</span><span style="top:110px">Speech</span></div>
</div>

<div class="ss l N" style="left:2212px;top:943px">
<div class="tb"><i class="dots"></i><span class="t1">dude - Outliers (Offici...</span><span class="t2">Product and UX Designer | Da...</span></div>
<div class="ab"><span class="url">localhost:4000</span><i class="abi"></i></div>
<div class="bmk">goals&nbsp;&nbsp; Gmail&nbsp;&nbsp; So Magnetic | Log...&nbsp;&nbsp; Meet - Design Sy...&nbsp;&nbsp; Getting Started wi...&nbsp;&nbsp; (17) Twitter&nbsp;&nbsp; text emoji&nbsp;&nbsp; Inbox (886) - dari...&nbsp;&nbsp; Quality Over Quan...</div>
<i class="logo" style="left:44px;top:38px"></i><div class="nm" style="left:83px;top:34px;width:40px;font-size:6.5px">Darian<br>Rosebrook</div><i class="av" style="left:160px;top:39px"></i>
<div class="nav" style="left:40px;top:61px;width:126px;font-size:2.9px">Design Work&nbsp; Writing&nbsp; Speaking&nbsp; About Me&nbsp; Updates&nbsp; How to Contact</div>
<i class="hr2" style="left:40px;top:73px;width:125px"></i>
<span class="up" style="left:41px;top:81px">UPDATES</span><span class="sa" style="left:150px;top:81px">See All</span>
<i class="it" style="left:41px;top:97px"></i><i class="it" style="left:66px;top:97px"></i><i class="it" style="left:91px;top:97px"></i><i class="it" style="left:116px;top:97px"></i><i class="it" style="left:141px;top:97px"></i>
<i class="it" style="left:43px;top:151px"></i><i class="it" style="left:68px;top:151px"></i><i class="it" style="left:93px;top:151px"></i><i class="it" style="left:118px;top:151px"></i>
<i class="hr1" style="left:40px;top:203px;width:125px"></i>
<span class="pux" style="left:41px;top:209px">PRODUCT &amp; UX DESIGNER</span>
<div class="ph" style="left:68px;top:221px;width:68px;height:44px"><i class="shirt" style="left:15px;top:34px;width:44px;height:20px"></i><i class="face" style="left:29px;top:7px;width:15px;height:22px"></i><i class="beard" style="left:32px;top:21px;width:9px;height:8px"></i><i class="hair" style="left:27px;top:2px;width:19px;height:10px"></i></div>
<div class="hero" style="left:40px;top:226px"><span>Hey there!</span><br><span>I'm Darian</span><br><span>Rosebrook, a</span></div>
<i class="sk" style="left:147px;top:209px;width:16px;height:56px"></i>
<div class="dt"><div class="dtb">Elements&nbsp; Console&nbsp; Sources&nbsp; Network&nbsp; Performance</div>
<i class="sel" style="top:59px"></i>
<i class="cd c2" style="left:5px;top:10px;width:35px;height:34px"></i><i class="cd c1" style="left:14px;top:44px;width:120px;height:46px"></i><i class="cd c2" style="left:10px;top:90px;width:130px;height:42px"></i>
<div class="crumb"><i></i></div><div class="sub">Styles&nbsp; Event Listeners&nbsp; DOM Breakpoints&nbsp; Properties&nbsp; Accessibility</div>
<i class="cd c2 sty"></i><div class="bxp"><div class="bx"><i></i><b></b><u></u></div></div></div>
</div>

<div class="ss l N" style="left:2605px;top:943px">
<div class="tb"><i class="dots"></i><span class="t1">dude - Outliers (Offici...</span><span class="t2">Product and UX Designer | Da...</span></div>
<div class="ab"><span class="url">localhost:4000</span><i class="abi"></i></div>
<div class="bmk">goals&nbsp;&nbsp; Gmail&nbsp;&nbsp; So Magnetic | Log...&nbsp;&nbsp; Meet - Design Sy...&nbsp;&nbsp; Getting Started wi...&nbsp;&nbsp; (17) Twitter&nbsp;&nbsp; text emoji&nbsp;&nbsp; Inbox (886) - dari...&nbsp;&nbsp; Quality Over Quan...</div>
<i class="logo" style="left:44px;top:38px"></i><div class="nm" style="left:83px;top:34px;width:40px;font-size:6.5px">Darian<br>Rosebrook</div><i class="av" style="left:160px;top:39px"></i>
<div class="nav" style="left:40px;top:61px;width:126px;font-size:2.9px">Design Work&nbsp; Writing&nbsp; Speaking&nbsp; About Me&nbsp; Updates&nbsp; How to Contact</div>
<i class="hr2" style="left:40px;top:73px;width:125px"></i>
<span class="up" style="left:41px;top:81px">UPDATES</span>
<i class="dash" style="left:40px;top:90px;width:23px;height:54px"></i><i class="dash" style="left:65px;top:90px;width:23px;height:54px"></i><i class="dash" style="left:90px;top:90px;width:23px;height:54px"></i><i class="dash" style="left:115px;top:90px;width:23px;height:54px"></i>
<i class="dash" style="left:40px;top:147px;width:23px;height:53px"></i><i class="dash" style="left:65px;top:147px;width:23px;height:53px"></i><i class="dash" style="left:90px;top:147px;width:23px;height:53px"></i><i class="dash" style="left:115px;top:147px;width:23px;height:53px"></i><i class="dash" style="left:140px;top:147px;width:25px;height:53px"></i>
<i class="it" style="left:41px;top:97px"></i><i class="it" style="left:66px;top:97px"></i><i class="it" style="left:91px;top:97px"></i><i class="it" style="left:116px;top:97px"></i>
<i class="it" style="left:43px;top:151px"></i><i class="it" style="left:68px;top:151px"></i><i class="it" style="left:93px;top:151px"></i><i class="it" style="left:118px;top:151px"></i>
<i class="hl" style="left:142px;top:90px;width:25px;height:51px"></i><span class="tt" style="left:112px;top:83px"><b>div.grid-item</b> 80.00 × 160.58</span>
<i class="hr1" style="left:40px;top:203px;width:125px"></i>
<span class="pux" style="left:41px;top:209px">PRODUCT &amp; UX DESIGNER</span>
<div class="ph" style="left:68px;top:221px;width:68px;height:44px"><i class="shirt" style="left:15px;top:34px;width:44px;height:20px"></i><i class="face" style="left:29px;top:7px;width:15px;height:22px"></i><i class="beard" style="left:32px;top:21px;width:9px;height:8px"></i><i class="hair" style="left:27px;top:2px;width:19px;height:10px"></i></div>
<div class="hero" style="left:40px;top:226px"><span>Hey there!</span><br><span>I'm Darian</span><br><span>Rosebrook, a</span></div>
<i class="sk" style="left:147px;top:209px;width:16px;height:56px"></i>
<div class="dt"><div class="dtb">Elements&nbsp; Console&nbsp; Sources&nbsp; Network&nbsp; Performance</div>
<i class="sel" style="top:63px"></i>
<i class="cd c2" style="left:5px;top:10px;width:35px;height:34px"></i><i class="cd c1" style="left:14px;top:44px;width:120px;height:46px"></i><i class="cd c2" style="left:10px;top:90px;width:130px;height:42px"></i>
<div class="crumb"><i></i></div><div class="sub">Styles&nbsp; Event Listeners&nbsp; DOM Breakpoints&nbsp; Properties&nbsp; Accessibility</div>
<i class="cd c2 sty"></i><div class="bxp"><div class="bx"><i></i><b></b><u></u></div></div></div>
</div>

<div class="ss l N" style="left:2997px;top:943px">
<div class="tb"><i class="dots"></i><span class="t1">dude - Outliers (Offici...</span><span class="t2">Product and UX Designer | Da...</span></div>
<div class="ab"><span class="url">localhost:4000</span><i class="abi"></i></div>
<div class="bmk">goals&nbsp;&nbsp; Gmail&nbsp;&nbsp; So Magnetic | Log...&nbsp;&nbsp; Meet - Design Sy...&nbsp;&nbsp; Getting Started wi...&nbsp;&nbsp; (17) Twitter&nbsp;&nbsp; text emoji&nbsp;&nbsp; Inbox (886) - dari...&nbsp;&nbsp; Quality Over Quan...</div>
<i class="logo" style="left:44px;top:38px"></i><div class="nm" style="left:83px;top:34px;width:40px;font-size:6.5px">Darian<br>Rosebrook</div><i class="av" style="left:160px;top:39px"></i>
<div class="nav" style="left:40px;top:61px;width:126px;font-size:2.9px">Design Work&nbsp; Writing&nbsp; Speaking&nbsp; About Me&nbsp; Updates&nbsp; How to Contact</div>
<i class="hr2" style="left:40px;top:73px;width:125px"></i>
<span class="up" style="left:41px;top:81px">UPDATES</span><span class="sa" style="left:150px;top:81px">See All</span>
<i class="cell" style="left:40px;top:90px;width:23px;height:54px"></i><i class="cell" style="left:65px;top:90px;width:23px;height:54px"></i><i class="cell" style="left:90px;top:90px;width:23px;height:54px"></i><i class="cell" style="left:115px;top:90px;width:23px;height:54px"></i><i class="cell" style="left:140px;top:90px;width:25px;height:54px"></i>
<i class="cell" style="left:40px;top:147px;width:23px;height:53px"></i><i class="cell" style="left:65px;top:147px;width:23px;height:53px"></i><i class="cell" style="left:90px;top:147px;width:23px;height:53px"></i><i class="cell" style="left:115px;top:147px;width:23px;height:53px"></i><i class="cell" style="left:140px;top:147px;width:25px;height:53px"></i>
<i class="it" style="left:41px;top:97px"></i><i class="it" style="left:66px;top:97px"></i><i class="it" style="left:91px;top:97px"></i><i class="it" style="left:116px;top:97px"></i><i class="it" style="left:141px;top:97px"></i>
<i class="it" style="left:43px;top:151px"></i><i class="it" style="left:68px;top:151px"></i><i class="it" style="left:93px;top:151px"></i><i class="it" style="left:118px;top:151px"></i>
<span class="tt" style="left:40px;top:83px"><b>div.grid</b> 440.88 × 378.19</span>
<i class="hr1" style="left:40px;top:203px;width:125px"></i>
<span class="pux" style="left:41px;top:209px">PRODUCT &amp; UX DESIGNER</span>
<div class="ph" style="left:68px;top:221px;width:68px;height:44px"><i class="shirt" style="left:15px;top:34px;width:44px;height:20px"></i><i class="face" style="left:29px;top:7px;width:15px;height:22px"></i><i class="beard" style="left:32px;top:21px;width:9px;height:8px"></i><i class="hair" style="left:27px;top:2px;width:19px;height:10px"></i></div>
<div class="hero" style="left:40px;top:226px"><span>Hey there!</span><br><span>I'm Darian</span><br><span>Rosebrook, a</span></div>
<i class="sk" style="left:147px;top:209px;width:16px;height:56px"></i>
<div class="dt"><div class="dtb">Elements&nbsp; Console&nbsp; Sources&nbsp; Network&nbsp; Performance</div>
<i class="sel" style="top:42px"></i>
<i class="cd c2" style="left:5px;top:10px;width:35px;height:34px"></i><i class="cd c1" style="left:14px;top:44px;width:120px;height:46px"></i><i class="cd c2" style="left:10px;top:90px;width:130px;height:42px"></i>
<div class="crumb"><i></i></div><div class="sub">Styles&nbsp; Event Listeners&nbsp; DOM Breakpoints&nbsp; Properties&nbsp; Accessibility</div>
<i class="cd c2 sty"></i><div class="bxp"><div class="bx"><i></i><b></b><u></u></div></div></div>
</div>

<div class="ss l N" style="left:3390px;top:943px">
<div class="tb"><i class="dots"></i><span class="t1">dude - Outliers (Offici...</span><span class="t2">Product and UX Designer | Da...</span></div>
<div class="ab"><span class="url">localhost:4000</span><i class="abi"></i></div>
<div class="bmk">goals&nbsp;&nbsp; Gmail&nbsp;&nbsp; So Magnetic | Log...&nbsp;&nbsp; Meet - Design Sy...&nbsp;&nbsp; Getting Started wi...&nbsp;&nbsp; (17) Twitter&nbsp;&nbsp; text emoji&nbsp;&nbsp; Inbox (886) - dari...&nbsp;&nbsp; Quality Over Quan...</div>
<i class="logo" style="left:44px;top:38px"></i><div class="nm" style="left:83px;top:34px;width:40px;font-size:6.5px">Darian<br>Rosebrook</div><i class="av" style="left:160px;top:39px"></i>
<div class="nav" style="left:40px;top:61px;width:126px;font-size:2.9px">Design Work&nbsp; Writing&nbsp; Speaking&nbsp; About Me&nbsp; Updates&nbsp; How to Contact</div>
<i class="hr2" style="left:40px;top:73px;width:125px"></i>
<span class="up" style="left:41px;top:81px">UPDATES</span><span class="sa" style="left:150px;top:81px">See All</span>
<i class="it" style="left:41px;top:97px"></i><i class="it" style="left:66px;top:97px"></i><i class="it" style="left:91px;top:97px"></i><i class="it" style="left:116px;top:97px"></i><i class="it" style="left:141px;top:97px"></i>
<i class="it" style="left:43px;top:151px"></i><i class="it" style="left:68px;top:151px"></i><i class="it" style="left:93px;top:151px"></i><i class="it" style="left:118px;top:151px"></i>
<i class="hr1" style="left:40px;top:203px;width:125px"></i>
<span class="pux" style="left:41px;top:209px">PRODUCT &amp; UX DESIGNER</span>
<div class="ph" style="left:68px;top:221px;width:68px;height:44px"><i class="shirt" style="left:15px;top:34px;width:44px;height:20px"></i><i class="face" style="left:29px;top:7px;width:15px;height:22px"></i><i class="beard" style="left:32px;top:21px;width:9px;height:8px"></i><i class="hair" style="left:27px;top:2px;width:19px;height:10px"></i></div>
<div class="hero" style="left:40px;top:226px"><span>Hey there!</span><br><span>I'm Darian</span><br><span>Rosebrook, a</span></div>
<i class="sk" style="left:147px;top:209px;width:16px;height:56px"></i>
<div class="dt"><div class="dtb">Elements&nbsp; Console&nbsp; Sources&nbsp; Network&nbsp; Performance</div>
<i class="sel" style="top:67px"></i>
<i class="cd c2" style="left:5px;top:10px;width:35px;height:34px"></i><i class="cd c1" style="left:14px;top:44px;width:120px;height:46px"></i><i class="cd c2" style="left:10px;top:90px;width:130px;height:42px"></i>
<div class="crumb"><i></i></div><div class="sub">Styles&nbsp; Event Listeners&nbsp; DOM Breakpoints&nbsp; Properties&nbsp; Accessibility</div>
<i class="cd c2 sty"></i><div class="bxp"><div class="bx"><i></i><b></b><u></u></div></div></div>
</div>

<div class="ss l N" style="left:3782px;top:943px">
<div class="tb"><i class="dots"></i><span class="t1">dude - Outliers (Offici...</span><span class="t2">Product and UX Designer | Da...</span></div>
<div class="ab"><span class="url">localhost:4000</span><i class="abi"></i></div>
<div class="bmk">goals&nbsp;&nbsp; Gmail&nbsp;&nbsp; So Magnetic | Log...&nbsp;&nbsp; Meet - Design Sy...&nbsp;&nbsp; Getting Started wi...&nbsp;&nbsp; (17) Twitter&nbsp;&nbsp; text emoji&nbsp;&nbsp; Inbox (886) - dari...&nbsp;&nbsp; Quality Over Quan...</div>
<i class="logo" style="left:44px;top:38px"></i><div class="nm" style="left:83px;top:34px;width:40px;font-size:6.5px">Darian<br>Rosebrook</div><i class="av" style="left:160px;top:39px"></i>
<div class="nav" style="left:40px;top:61px;width:126px;font-size:2.9px">Design Work&nbsp; Writing&nbsp; Speaking&nbsp; About Me&nbsp; Updates&nbsp; How to Contact</div>
<span class="pux" style="left:41px;top:209px">PRODUCT &amp; UX DESIGNER</span>
<div class="ph" style="left:68px;top:221px;width:68px;height:44px"><i class="shirt" style="left:15px;top:34px;width:44px;height:20px"></i><i class="face" style="left:29px;top:7px;width:15px;height:22px"></i><i class="beard" style="left:32px;top:21px;width:9px;height:8px"></i><i class="hair" style="left:27px;top:2px;width:19px;height:10px"></i></div>
<div class="hero" style="left:40px;top:226px"><span>Hey there!</span><br><span>I'm Darian</span><br><span>Rosebrook, a</span></div>
<i class="col" style="left:34px;top:73px;width:3px;height:192px"></i>
<i class="col" style="left:40px;top:80px;width:24px;height:185px"></i><i class="col" style="left:66px;top:80px;width:23px;height:185px"></i><i class="col" style="left:92px;top:80px;width:23px;height:185px"></i><i class="col" style="left:117px;top:80px;width:23px;height:185px"></i><i class="col" style="left:142px;top:80px;width:23px;height:185px"></i>
<i class="col" style="left:168px;top:73px;width:3px;height:192px"></i>
<i class="it" style="left:41px;top:97px"></i><i class="it" style="left:66px;top:97px"></i><i class="it" style="left:91px;top:97px"></i><i class="it" style="left:116px;top:97px"></i><i class="it" style="left:141px;top:97px"></i>
<i class="it" style="left:43px;top:151px"></i><i class="it" style="left:68px;top:151px"></i><i class="it" style="left:93px;top:151px"></i><i class="it" style="left:118px;top:151px"></i>
<span class="tt" style="left:34px;top:66px"><b>main.main-content</b> 400 × 8602.77</span>
<div class="dt"><div class="dtb">Elements&nbsp; Console&nbsp; Sources&nbsp; Network&nbsp; Performance</div>
<i class="sel" style="top:29px"></i>
<i class="cd c2" style="left:5px;top:10px;width:35px;height:34px"></i><i class="cd c1" style="left:14px;top:44px;width:120px;height:46px"></i><i class="cd c2" style="left:10px;top:90px;width:130px;height:42px"></i>
<div class="crumb"><i></i></div><div class="sub">Styles&nbsp; Event Listeners&nbsp; DOM Breakpoints&nbsp; Properties&nbsp; Accessibility</div>
<i class="cd c2 sty"></i><div class="bxp"><div class="bx"><i></i><b></b><u></u></div></div></div>
</div>

<div class="ss l N" style="left:4175px;top:943px">
<div class="tb"><i class="dots"></i><span class="t1">dude - Outliers (Offici...</span><span class="t2">Product and UX Designer | Da...</span></div>
<div class="ab"><span class="url">localhost:4000</span><i class="abi"></i></div>
<div class="bmk">goals&nbsp;&nbsp; Gmail&nbsp;&nbsp; So Magnetic | Log...&nbsp;&nbsp; Meet - Design Sy...&nbsp;&nbsp; Getting Started wi...&nbsp;&nbsp; (17) Twitter&nbsp;&nbsp; text emoji&nbsp;&nbsp; Inbox (886) - dari...&nbsp;&nbsp; Quality Over Quan...</div>
<i class="logo" style="left:44px;top:38px"></i><div class="nm" style="left:83px;top:34px;width:40px;font-size:6.5px">Darian<br>Rosebrook</div><i class="av" style="left:160px;top:39px"></i>
<div class="nav" style="left:40px;top:61px;width:126px;font-size:2.9px">Design Work&nbsp; Writing&nbsp; Speaking&nbsp; About Me&nbsp; Updates&nbsp; How to Contact</div>
<i class="hr2" style="left:40px;top:73px;width:125px"></i>
<span class="up" style="left:41px;top:81px">UPDATES</span><span class="sa" style="left:150px;top:81px">See All</span>
<i class="it" style="left:41px;top:97px"></i><i class="it" style="left:66px;top:97px"></i><i class="it" style="left:91px;top:97px"></i><i class="it" style="left:116px;top:97px"></i><i class="it" style="left:141px;top:97px"></i>
<i class="it" style="left:43px;top:151px"></i><i class="it" style="left:68px;top:151px"></i><i class="it" style="left:93px;top:151px"></i><i class="it" style="left:118px;top:151px"></i>
<i class="hr1" style="left:40px;top:203px;width:125px"></i>
<span class="pux" style="left:41px;top:209px">PRODUCT &amp; UX DESIGNER</span>
<div class="ph" style="left:68px;top:221px;width:68px;height:44px"><i class="shirt" style="left:15px;top:34px;width:44px;height:20px"></i><i class="face" style="left:29px;top:7px;width:15px;height:22px"></i><i class="beard" style="left:32px;top:21px;width:9px;height:8px"></i><i class="hair" style="left:27px;top:2px;width:19px;height:10px"></i></div>
<div class="hero" style="left:40px;top:226px"><span>Hey there!</span><br><span>I'm Darian</span><br><span>Rosebrook, a</span></div>
<i class="sk" style="left:147px;top:209px;width:16px;height:56px"></i>
<div class="dt"><div class="dtb">Elements&nbsp; Console&nbsp; Sources&nbsp; Network&nbsp; Performance</div>
<i class="sel" style="top:63px"></i>
<i class="cd c2" style="left:5px;top:10px;width:35px;height:34px"></i><i class="cd c1" style="left:14px;top:44px;width:120px;height:46px"></i><i class="cd c2" style="left:10px;top:90px;width:130px;height:42px"></i>
<div class="crumb"><i></i></div><div class="sub">Styles&nbsp; Event Listeners&nbsp; DOM Breakpoints&nbsp; Properties&nbsp; Accessibility</div>
<i class="cd c2 sty"></i><div class="bxp"><div class="bx"><i></i><b></b><u></u></div></div></div>
</div>

</body></html>
